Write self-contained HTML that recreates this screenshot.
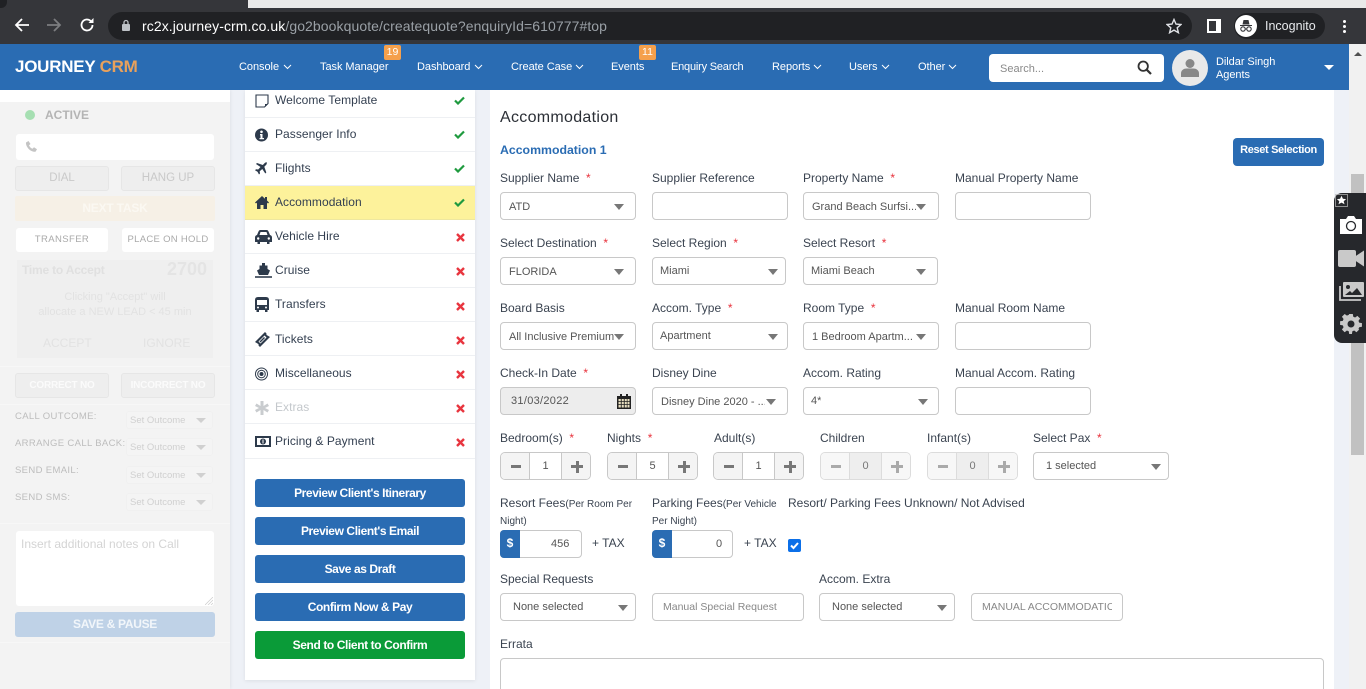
<!DOCTYPE html>
<html><head><meta charset="utf-8"><title>Journey CRM</title>
<style>
*{box-sizing:border-box}
html,body{margin:0;padding:0;width:1366px;height:689px;overflow:hidden;background:#eef1f7;font-family:"Liberation Sans",sans-serif;color:#343a40}
div,span,svg{position:absolute}
#w{left:0;top:0;width:1366px;height:689px;overflow:hidden;background:#eef1f7}
.t{white-space:nowrap;font-size:12px;line-height:16px;letter-spacing:0;color:#3a4350}
.r{color:#e8323c;position:static}
.sm{position:static;font-size:10px;letter-spacing:0}
.ctl{height:28px;background:#fff;border:1px solid #c8c8c8;border-radius:4px}
.v{white-space:nowrap;font-size:11px;line-height:14px;color:#555;letter-spacing:0;overflow:hidden;margin-top:1px}
.car{width:0;height:0;border-left:5.5px solid transparent;border-right:5.5px solid transparent;border-top:6px solid #777}
.nav{white-space:nowrap;font-size:11px;line-height:14px;color:#fff;top:60px;letter-spacing:-.05px}
.chev{top:64px;width:9px;height:6px}
.mi{left:245px;width:230px;height:34px;border-bottom:1px solid #eef0f3;background:#fff}
.mt{left:275px;white-space:nowrap;font-size:12px;line-height:16px;color:#333f50;letter-spacing:.05px}
.btn{left:255px;width:210px;height:28px;background:#2a6cb3;border-radius:3px;color:#fff;font-size:12px;font-weight:bold;letter-spacing:-.4px;line-height:28px;text-align:center}
.st{top:452px;height:28px;width:91px;background:#fff;border:1px solid #c8c8c8;border-radius:5px}
.sb{top:0;height:26px;width:28px;background:#f4f4f4;border-radius:4px 0 0 4px}
.sv{left:28px;top:0;width:33px;height:26px;border-left:1px solid #c8c8c8;border-right:1px solid #c8c8c8;font-size:11px;line-height:26px;text-align:center;color:#555}
.sb2{left:61px;top:0;height:26px;width:28px;background:#f4f4f4;border-radius:0 4px 4px 0}
.m{left:10px;top:12px;width:10px;height:3px;background:#777}
.p{left:9px;top:12px;width:12px;height:3px;background:#777}
.p2{left:13.5px;top:7.500px;width:3px;height:12px;background:#777}
.dis{border-color:#dcdcdc}
.dis .sb,.dis .sb2{background:#f7f7f7}
.dis .sv{background:#eee;border-color:#dcdcdc;color:#777}
.dis .m,.dis .p,.dis .p2{background:#aaa}
.lb{font-size:9.500px;line-height:12px;letter-spacing:.35px;color:#bdbdbd;white-space:nowrap;left:15px}
.ss{left:126px;width:87px;height:18px;background:#f4f4f4;border:1px solid #f0f0f0;border-radius:3px;font-size:9.500px;line-height:18px;color:#d0d0d0;padding-left:3px;white-space:nowrap}
.ss i{position:absolute;right:6px;top:6px;width:0;height:0;border-left:5px solid transparent;border-right:5px solid transparent;border-top:5px solid #d0d0d0}
.gb{height:25px;background:#eeeeee;border:1px solid #e6e6e6;border-radius:3px;font-size:11.500px;line-height:23px;text-align:center;color:#c9c9c9}
</style></head><body><div id="w">

<!-- browser chrome -->
<div style="left:0;top:0;width:1366px;height:8px;background:#e9e9e9"></div>
<div style="left:0;top:0;width:248px;height:8px;background:#35363a"></div>
<div style="left:0;top:0;width:7px;height:8px;background:#202124;border-radius:0 0 6px 0"></div>
<div style="left:0;top:8px;width:1366px;height:36px;background:#35363a"></div>
<svg style="left:14px;top:17px" width="16" height="16" viewBox="0 0 16 16"><path d="M15 8H2M8 2L2 8l6 6" fill="none" stroke="#fff" stroke-width="1.8"/></svg>
<svg style="left:46px;top:17px" width="16" height="16" viewBox="0 0 16 16"><path d="M1 8h13M8 2l6 6-6 6" fill="none" stroke="#7c7d80" stroke-width="1.8"/></svg>
<svg style="left:79px;top:17px" width="16" height="16" viewBox="0 0 16 16"><path d="M13.500 8a5.500 5.500 0 1 1-1.600-3.900" fill="none" stroke="#fff" stroke-width="1.8"/><path d="M9.500 6h5V1z" fill="#fff"/></svg>
<div style="left:108px;top:12px;width:1084px;height:28px;border-radius:14px;background:#202124"></div>
<svg style="left:121px;top:19px" width="10" height="13" viewBox="0 0 10 13"><rect x="1" y="5" width="8" height="7" rx="1" fill="#bdc1c6"/><path d="M3 5V3.500a2 2 0 0 1 4 0V5" fill="none" stroke="#bdc1c6" stroke-width="1.300"/></svg>
<div style="left:142px;top:17px;font-size:14px;line-height:18px;white-space:nowrap;color:#fff;letter-spacing:.08px">rc2x.journey-crm.co.uk<span style="position:static;color:#9aa0a6">/go2bookquote/createquote?enquiryId=610777#top</span></div>
<svg style="left:1166px;top:18px" width="16" height="16" viewBox="0 0 16 16"><path d="M8 1.500l2 4.600 5 .4-3.800 3.300 1.200 4.900L8 12.100l-4.400 2.600 1.200-4.900L1 6.500l5-.4z" fill="none" stroke="#dfe1e5" stroke-width="1.400"/></svg>
<div style="left:1207px;top:19px;width:14px;height:14px;background:#fff"></div>
<div style="left:1209px;top:21px;width:7px;height:10px;background:#35363a"></div>
<div style="left:1234px;top:13px;width:91px;height:26px;border-radius:13px;background:#202124"></div>
<div style="left:1235px;top:15px;width:22px;height:22px;border-radius:50%;background:#fff"></div>
<svg style="left:1238px;top:18px" width="16" height="16" viewBox="0 0 16 16"><path d="M2 7h12v1H2zM4.500 6.500L5.500 2h5l1 4.500z" fill="#35363a"/><circle cx="5" cy="11" r="2.200" fill="none" stroke="#35363a" stroke-width="1.100"/><circle cx="11" cy="11" r="2.200" fill="none" stroke="#35363a" stroke-width="1.100"/><path d="M7 11h2" stroke="#35363a"/></svg>
<div style="left:1265px;top:18px;font-size:12.500px;line-height:16px;color:#e8eaed;white-space:nowrap">Incognito</div>
<div style="left:1343px;top:20px;width:3px;height:3px;border-radius:50%;background:#fff"></div>
<div style="left:1343px;top:25px;width:3px;height:3px;border-radius:50%;background:#fff"></div>
<div style="left:1343px;top:30px;width:3px;height:3px;border-radius:50%;background:#fff"></div>

<!-- page columns -->
<div style="left:0;top:90px;width:230px;height:599px;background:#f3f3f3;box-shadow:1px 0 3px rgba(0,0,0,.06)"></div>
<div style="left:0;top:90px;width:230px;height:12px;background:#fff"></div>
<div style="left:245px;top:90px;width:230px;height:590px;background:#fff;box-shadow:0 1px 4px rgba(0,0,0,.08)"></div>
<div style="left:490px;top:90px;width:844px;height:599px;background:#fff"></div>

<!-- menu -->
<div class="mi" style="top:84px"></div>
<div class="mi" style="top:118px"></div>
<div class="mi" style="top:152px"></div>
<div class="mi" style="top:186px;background:#fdf29b;border-bottom-color:#eee7a0"></div>
<div class="mi" style="top:220px"></div>
<div class="mi" style="top:254px"></div>
<div class="mi" style="top:288px"></div>
<div class="mi" style="top:322px"></div>
<div class="mi" style="top:356px"></div>
<div class="mi" style="top:390px"></div>
<div class="mi" style="top:424px;height:35px"></div>

<!-- header -->
<div style="left:0;top:44px;width:1349px;height:46px;background:#2a6cb3"></div>
<div style="left:15px;top:56px;font-size:17px;line-height:22px;font-weight:bold;white-space:nowrap;letter-spacing:-.25px;color:#fff">JOURNEY <span style="position:static;color:#e8a15c">CRM</span></div>
<div class="nav" style="left:239px">Console</div>
<svg class="chev" style="left:283px" viewBox="0 0 9 6"><path d="M1 1l3.500 3.500L8 1" fill="none" stroke="#fff"/></svg>
<div class="nav" style="left:320px">Task Manager</div>
<div style="left:384px;top:45px;width:17px;height:15px;background:#f5a04c;border-radius:2px;color:#fff;font-size:10.500px;line-height:15px;text-align:center">19</div>
<div class="nav" style="left:417px">Dashboard</div>
<svg class="chev" style="left:474px" viewBox="0 0 9 6"><path d="M1 1l3.500 3.500L8 1" fill="none" stroke="#fff"/></svg>
<div class="nav" style="left:511px">Create Case</div>
<svg class="chev" style="left:575px" viewBox="0 0 9 6"><path d="M1 1l3.500 3.500L8 1" fill="none" stroke="#fff"/></svg>
<div class="nav" style="left:611px">Events</div>
<div style="left:639px;top:45px;width:17px;height:15px;background:#f5a04c;border-radius:2px;color:#fff;font-size:10.500px;line-height:15px;text-align:center">11</div>
<div class="nav" style="left:671px;letter-spacing:-.2px">Enquiry Search</div>
<div class="nav" style="left:772px">Reports</div>
<svg class="chev" style="left:813px" viewBox="0 0 9 6"><path d="M1 1l3.500 3.500L8 1" fill="none" stroke="#fff"/></svg>
<div class="nav" style="left:849px">Users</div>
<svg class="chev" style="left:881px" viewBox="0 0 9 6"><path d="M1 1l3.500 3.500L8 1" fill="none" stroke="#fff"/></svg>
<div class="nav" style="left:918px">Other</div>
<svg class="chev" style="left:948px" viewBox="0 0 9 6"><path d="M1 1l3.500 3.500L8 1" fill="none" stroke="#fff"/></svg>
<div style="left:989px;top:54px;width:175px;height:28px;background:#fff;border-radius:4px"></div>
<div style="left:1000px;top:62px;font-size:11px;line-height:14px;color:#8a8a8a;letter-spacing:0">Search...</div>
<svg style="left:1137px;top:60px" width="15" height="15" viewBox="0 0 15 15"><circle cx="6.200" cy="6.200" r="4.700" fill="none" stroke="#333" stroke-width="1.800"/><path d="M9.700 9.700L14 14" stroke="#333" stroke-width="2.200"/></svg>
<div style="left:1172px;top:50px;width:36px;height:36px;border-radius:50%;background:#e9e9e9"></div>
<svg style="left:1180px;top:58px" width="20" height="20" viewBox="0 0 20 20"><circle cx="10" cy="5.500" r="4.500" fill="#888"/><path d="M1 19v-3.500C1 12 4 10.500 6.500 10.500h7c2.500 0 5.500 1.500 5.500 5V19z" fill="#888"/></svg>
<div style="left:1216px;top:56px;font-size:11px;line-height:12.500px;color:#fff;white-space:nowrap;letter-spacing:-.05px">Dildar Singh<br>Agents</div>
<div style="left:1324px;top:65px;width:0;height:0;border-left:5px solid transparent;border-right:5px solid transparent;border-top:5px solid #fff"></div>

<!-- left panel -->
<div style="left:25px;top:110px;width:10px;height:10px;border-radius:50%;background:#a6dfb2"></div>
<div style="left:45px;top:107px;font-size:12px;line-height:16px;font-weight:bold;color:#b4b4b4">ACTIVE</div>
<div style="left:16px;top:134px;width:198px;height:26px;background:#fff;border-radius:3px"></div>
<svg style="left:25px;top:140px" width="13" height="13" viewBox="0 0 13 13"><path d="M1 2.500L3.500 1l2 3-1.500 1.300c.6 1.600 1.800 2.800 3.400 3.400L9 7.200l3 2-1.500 2.500C6 12.500.5 7 1 2.500z" fill="#c4c4c4"/></svg>
<div class="gb" style="left:15px;top:166px;width:94px">DIAL</div>
<div class="gb" style="left:121px;top:166px;width:94px">HANG UP</div>
<div style="left:15px;top:196px;width:200px;height:25px;background:#f6f0e6;border-radius:2px;color:#fbf8f2;font-size:12px;font-weight:bold;line-height:25px;text-align:center;letter-spacing:-.2px">NEXT TASK</div>
<div style="left:16px;top:228px;width:92px;height:24px;background:#fff;border-radius:3px;color:#aaa;font-size:9.500px;letter-spacing:.4px;line-height:24px;text-align:center">TRANSFER</div>
<div style="left:122px;top:228px;width:92px;height:24px;background:#fff;border-radius:3px;color:#aaa;font-size:9.500px;letter-spacing:.3px;line-height:24px;text-align:center;white-space:nowrap">PLACE ON HOLD</div>
<div style="left:17px;top:260px;width:196px;height:98px;background:#efefef"></div>
<div style="left:22px;top:262px;font-size:12px;line-height:16px;font-weight:bold;letter-spacing:-.2px;color:#e0e0e0">Time to Accept</div>
<div style="left:167px;top:259px;font-size:18px;line-height:20px;font-weight:bold;color:#e4e4e4">2700</div>
<div style="left:22px;top:290px;width:186px;font-size:11px;line-height:15px;text-align:center;color:#e2e2e2">Clicking "Accept" will<br>allocate a NEW LEAD &lt; 45 min</div>
<div style="left:43px;top:335px;font-size:12px;line-height:16px;color:#e2e2e2">ACCEPT</div>
<div style="left:143px;top:335px;font-size:12px;line-height:16px;color:#e2e2e2">IGNORE</div>
<div style="left:0;top:366px;width:230px;height:1px;background:#f7f7f7"></div>
<div class="gb" style="left:15px;top:373px;width:94px;font-size:10px;line-height:24px;letter-spacing:-.2px;font-weight:bold;color:#fbfbfb;white-space:nowrap">CORRECT NO</div>
<div class="gb" style="left:121px;top:373px;width:94px;font-size:10px;line-height:24px;letter-spacing:-.2px;font-weight:bold;color:#fbfbfb;white-space:nowrap">INCORRECT NO</div>
<div style="left:0;top:404px;width:230px;height:1px;background:#f7f7f7"></div>
<div class="lb" style="top:411px">CALL OUTCOME:</div><div class="ss" style="top:411px">Set Outcome<i></i></div>
<div class="lb" style="top:438px">ARRANGE CALL BACK:</div><div class="ss" style="top:438px">Set Outcome<i></i></div>
<div class="lb" style="top:465px">SEND EMAIL:</div><div class="ss" style="top:466px">Set Outcome<i></i></div>
<div class="lb" style="top:492px">SEND SMS:</div><div class="ss" style="top:493px">Set Outcome<i></i></div>
<div style="left:0;top:523px;width:230px;height:1px;background:#f7f7f7"></div>
<div style="left:16px;top:531px;width:198px;height:75px;background:#fff;border-radius:3px"></div>
<div style="left:21px;top:536px;font-size:12px;line-height:16px;color:#d4d4d4;white-space:nowrap">Insert additional notes on Call</div>
<svg style="left:205px;top:597px" width="8" height="8" viewBox="0 0 8 8"><path d="M0 8l8-8M3 8l5-5M6 8l2-2" stroke="#ccc" stroke-width=".7"/></svg>
<div style="left:15px;top:612px;width:200px;height:25px;background:#bfd2e7;border-radius:3px;color:#f2f6fa;font-size:12px;font-weight:bold;line-height:24px;text-align:center;letter-spacing:-.3px">SAVE &amp; PAUSE</div>
<div style="left:0;top:642px;width:230px;height:1px;background:#f7f7f7"></div>

<div class="mt" style="top:92px">Welcome Template</div>
<div class="mt" style="top:126px">Passenger Info</div>
<div class="mt" style="top:160px">Flights</div>
<div class="mt" style="top:194px">Accommodation</div>
<div class="mt" style="top:228px">Vehicle Hire</div>
<div class="mt" style="top:262px">Cruise</div>
<div class="mt" style="top:296px">Transfers</div>
<div class="mt" style="top:331px">Tickets</div>
<div class="mt" style="top:365px">Miscellaneous</div>
<div class="mt" style="top:399px;color:#c4c8cc">Extras</div>
<div class="mt" style="top:433px">Pricing &amp; Payment</div>

<svg style="left:255px;top:94px" width="14" height="14" viewBox="0 0 14 14"><path d="M1 1h12v8.500L9.500 13H1z" fill="none" stroke="#2d3a4b" stroke-width="1.100"/><path d="M10 13V10h3z" fill="#2d3a4b"/></svg>
<svg style="left:255px;top:128px" width="13" height="14" viewBox="0 0 13 14"><circle cx="6.500" cy="7" r="6.500" fill="#2d3a4b"/><circle cx="6.500" cy="3.800" r="1.300" fill="#fff"/><path d="M5 6h2.500v4H9v1.300H4.500V10H5.500V7.300H5z" fill="#fff"/></svg>
<svg style="left:255px;top:162px" width="13" height="13" viewBox="0 0 13 13"><path d="M12.500.500c-1-.6-2.300 0-3 .8L7.800 3 2 1 1 2l4.500 3-2.300 2.500L1 7.200 0 8.200l2.500 1.500L4 12.500l1-1-.3-2.200L7.300 7l3 4.500 1-1-2-5.800 1.700-1.700c.8-.8 1.100-2 .5-3z" fill="#2d3a4b"/></svg>
<svg style="left:255px;top:196px" width="14" height="13" viewBox="0 0 14 13"><path d="M7 0L0 6.500l1 1L2 6.600V13h3.500V9h3v4H12V6.600l1 .9 1-1-2-2V1h-2v1.800z" fill="#2d3a4b"/></svg>
<svg style="left:255px;top:230px" width="17" height="14" viewBox="0 0 17 14"><path d="M3.500 1.500Q4 0 5.500 0h6q1.500 0 2 1.500L15 5q2 .5 2 2.500V12h-2.500v2H12v-2H5v2H2.500v-2H0V7.500Q0 5.500 2 5zM4.500 5h8l-1-3h-6z" fill="#2d3a4b"/><circle cx="3.200" cy="8.500" r="1.200" fill="#fff"/><circle cx="13.800" cy="8.500" r="1.200" fill="#fff"/></svg>
<svg style="left:255px;top:263px" width="17" height="15" viewBox="0 0 17 15"><path d="M7 0h3v2.500h2.500V6L15 7.500 13 12H4L2 7.500 4.500 6V2.500H7z" fill="#2d3a4b"/><path d="M0 13h17v2H0z" fill="#5a6472"/></svg>
<svg style="left:255px;top:297px" width="14" height="15" viewBox="0 0 14 15"><path d="M0 3q0-3 3-3h8q3 0 3 3v10h-1.500v2H10v-2H4v2H1.500v-2H0z" fill="#2d3a4b"/><path d="M2 3h10v5H2z" fill="#fff"/><circle cx="3" cy="10.500" r="1" fill="#fff"/><circle cx="11" cy="10.500" r="1" fill="#fff"/></svg>
<svg style="left:255px;top:332px" width="15" height="15" viewBox="0 0 15 15"><path d="M10 0l1.500 1.500q-.5 1.500 1 2L15 5 5 15l-1.500-1.500q.5-1.500-1-2L0 10z" fill="#2d3a4b"/><path d="M9.500 3.500l2 2-6 6-2-2z" fill="#fff"/><path d="M9 5l1 1-4.500 4.500-1-1z" fill="#2d3a4b"/></svg>
<svg style="left:255px;top:367px" width="13" height="14" viewBox="0 0 13 14"><circle cx="6.500" cy="7" r="6" fill="none" stroke="#2d3a4b"/><circle cx="6.500" cy="7" r="3.800" fill="none" stroke="#2d3a4b"/><circle cx="6.500" cy="7" r="2" fill="#2d3a4b"/></svg>
<svg style="left:255px;top:401px" width="14" height="14" viewBox="0 0 14 14"><path d="M5.500 0h3v5l4-2.500L14 5 10 7l4 2-1.500 2.500-4-2.500v5h-3V9l-4 2.500L0 9l4-2-4-2 1.500-2.500 4 2.500z" fill="#c9cccf"/></svg>
<svg style="left:255px;top:436px" width="16" height="11" viewBox="0 0 16 11"><path d="M0 0h16v11H0z" fill="#2d3a4b"/><path d="M2 2h12v7H2z" fill="#fff"/><circle cx="8" cy="5.500" r="3" fill="#2d3a4b"/><path d="M7.500 3.500h1v4h-1z" fill="#fff"/></svg>

<svg style="left:454px;top:96px" width="11" height="9" viewBox="0 0 11 9"><path d="M1 4.500L4 7.500l6-6" fill="none" stroke="#1f9a3f" stroke-width="2.200"/></svg>
<svg style="left:454px;top:130px" width="11" height="9" viewBox="0 0 11 9"><path d="M1 4.500L4 7.500l6-6" fill="none" stroke="#1f9a3f" stroke-width="2.200"/></svg>
<svg style="left:454px;top:164px" width="11" height="9" viewBox="0 0 11 9"><path d="M1 4.500L4 7.500l6-6" fill="none" stroke="#1f9a3f" stroke-width="2.200"/></svg>
<svg style="left:454px;top:198px" width="11" height="9" viewBox="0 0 11 9"><path d="M1 4.500L4 7.500l6-6" fill="none" stroke="#1f9a3f" stroke-width="2.200"/></svg>
<svg style="left:456px;top:233px" width="9" height="9" viewBox="0 0 9 9"><path d="M1 1l7 7M8 1L1 8" stroke="#e8353f" stroke-width="2.400"/></svg>
<svg style="left:456px;top:267px" width="9" height="9" viewBox="0 0 9 9"><path d="M1 1l7 7M8 1L1 8" stroke="#e8353f" stroke-width="2.400"/></svg>
<svg style="left:456px;top:302px" width="9" height="9" viewBox="0 0 9 9"><path d="M1 1l7 7M8 1L1 8" stroke="#e8353f" stroke-width="2.400"/></svg>
<svg style="left:456px;top:336px" width="9" height="9" viewBox="0 0 9 9"><path d="M1 1l7 7M8 1L1 8" stroke="#e8353f" stroke-width="2.400"/></svg>
<svg style="left:456px;top:370px" width="9" height="9" viewBox="0 0 9 9"><path d="M1 1l7 7M8 1L1 8" stroke="#e8353f" stroke-width="2.400"/></svg>
<svg style="left:456px;top:404px" width="9" height="9" viewBox="0 0 9 9"><path d="M1 1l7 7M8 1L1 8" stroke="#e8353f" stroke-width="2.400"/></svg>
<svg style="left:456px;top:438px" width="9" height="9" viewBox="0 0 9 9"><path d="M1 1l7 7M8 1L1 8" stroke="#e8353f" stroke-width="2.400"/></svg>

<div class="btn" style="top:479px">Preview Client's Itinerary</div>
<div class="btn" style="top:517px">Preview Client's Email</div>
<div class="btn" style="top:555px">Save as Draft</div>
<div class="btn" style="top:593px">Confirm Now &amp; Pay</div>
<div class="btn" style="top:631px;background:#0a9b38">Send to Client to Confirm</div>

<!-- main form -->
<div style="left:500px;top:108px;font-size:16px;line-height:20px;color:#2b2f36;white-space:nowrap;letter-spacing:.3px">Accommodation</div>
<div style="left:500px;top:142px;font-size:12.300px;line-height:16px;font-weight:bold;color:#2a6cb3;white-space:nowrap">Accommodation 1</div>
<div style="left:1233px;top:138px;width:91px;height:28px;background:#2a6cb3;border-radius:4px;color:#fff;font-size:11px;font-weight:bold;letter-spacing:-.35px;line-height:25px;text-align:center;white-space:nowrap">Reset Selection</div>

<!-- row 1 -->
<div class="t" style="left:500px;top:170px">Supplier Name <span class="r">&nbsp;*</span></div>
<div class="t" style="left:652px;top:170px">Supplier Reference</div>
<div class="t" style="left:803px;top:170px">Property Name <span class="r">&nbsp;*</span></div>
<div class="t" style="left:955px;top:170px">Manual Property Name</div>
<div class="ctl" style="left:500px;top:192px;width:136px"></div><div class="v" style="left:509px;top:199px">ATD</div><div class="car" style="left:614px;top:204px"></div>
<div class="ctl" style="left:652px;top:192px;width:136px"></div>
<div class="ctl" style="left:803px;top:192px;width:136px"></div><div class="v" style="left:812px;top:199px;width:104px">Grand Beach Surfsi...</div><div class="car" style="left:916px;top:204px"></div>
<div class="ctl" style="left:955px;top:192px;width:136px"></div>

<!-- row 2 -->
<div class="t" style="left:500px;top:235px">Select Destination <span class="r">&nbsp;*</span></div>
<div class="t" style="left:652px;top:235px">Select Region <span class="r">&nbsp;*</span></div>
<div class="t" style="left:803px;top:235px">Select Resort <span class="r">&nbsp;*</span></div>
<div class="ctl" style="left:500px;top:257px;width:136px"></div><div class="v" style="left:509px;top:264px">FLORIDA</div><div class="car" style="left:614px;top:269px"></div>
<div class="ctl" style="left:652px;top:257px;width:134px"></div><div class="v" style="left:660px;top:263px">Miami</div><div class="car" style="left:768px;top:269px"></div>
<div class="ctl" style="left:803px;top:257px;width:135px"></div><div class="v" style="left:811px;top:263px">Miami Beach</div><div class="car" style="left:916px;top:269px"></div>

<!-- row 3 -->
<div class="t" style="left:500px;top:300px">Board Basis</div>
<div class="t" style="left:652px;top:300px">Accom. Type <span class="r">&nbsp;*</span></div>
<div class="t" style="left:803px;top:300px">Room Type <span class="r">&nbsp;*</span></div>
<div class="t" style="left:955px;top:300px">Manual Room Name</div>
<div class="ctl" style="left:500px;top:322px;width:136px"></div><div class="v" style="left:509px;top:329px;width:108px">All Inclusive Premium</div><div class="car" style="left:614px;top:334px"></div>
<div class="ctl" style="left:652px;top:322px;width:136px"></div><div class="v" style="left:660px;top:328px">Apartment</div><div class="car" style="left:768px;top:334px"></div>
<div class="ctl" style="left:803px;top:322px;width:136px"></div><div class="v" style="left:812px;top:329px;width:104px">1 Bedroom Apartm...</div><div class="car" style="left:916px;top:334px"></div>
<div class="ctl" style="left:955px;top:322px;width:136px"></div>

<!-- row 4 -->
<div class="t" style="left:500px;top:365px">Check-In Date <span class="r">&nbsp;*</span></div>
<div class="t" style="left:652px;top:365px">Disney Dine</div>
<div class="t" style="left:803px;top:365px">Accom. Rating</div>
<div class="t" style="left:955px;top:365px">Manual Accom. Rating</div>
<div class="ctl" style="left:500px;top:387px;width:136px;background:#ededed"></div><div class="v" style="left:511px;top:393px;letter-spacing:.3px">31/03/2022</div>
<svg style="left:617px;top:394px" width="14" height="15" viewBox="0 0 14 15"><path d="M3 0h2v2h4V0h2v2h3v13H0V2h3z" fill="#222"/><path d="M1.500 5h2.300v2.200H1.500zM4.700 5h2.100v2.200H4.700zM7.700 5h2.100v2.200H7.700zM10.500 5h2v2.200h-2zM1.500 8h2.300v2.200H1.500zM4.700 8h2.100v2.200H4.700zM7.700 8h2.100v2.200H7.700zM10.500 8h2v2.200h-2zM1.500 11h2.300v2.500H1.500zM4.700 11h2.100v2.500H4.700zM7.700 11h2.100v2.500H7.700zM10.500 11h2v2.500h-2z" fill="#e8dfc0"/></svg>
<div class="ctl" style="left:652px;top:387px;width:136px"></div><div class="v" style="left:661px;top:394px;width:104px">Disney Dine 2020 - ...</div><div class="car" style="left:766px;top:399px"></div>
<div class="ctl" style="left:803px;top:387px;width:136px"></div><div class="v" style="left:811px;top:393px">4*</div><div class="car" style="left:918px;top:399px"></div>
<div class="ctl" style="left:955px;top:387px;width:136px"></div>

<!-- row 5 -->
<div class="t" style="left:500px;top:430px">Bedroom(s) <span class="r">&nbsp;*</span></div>
<div class="t" style="left:607px;top:430px">Nights <span class="r">&nbsp;*</span></div>
<div class="t" style="left:714px;top:430px">Adult(s)</div>
<div class="t" style="left:820px;top:430px">Children</div>
<div class="t" style="left:927px;top:430px">Infant(s)</div>
<div class="t" style="left:1033px;top:430px">Select Pax <span class="r">&nbsp;*</span></div>

<div class="st" style="left:500px"><div class="sb" style="left:0"><div class="m"></div></div><div class="sv">1</div><div class="sb2"><div class="p"></div><div class="p2"></div></div></div>
<div class="st" style="left:607px"><div class="sb" style="left:0"><div class="m"></div></div><div class="sv">5</div><div class="sb2"><div class="p"></div><div class="p2"></div></div></div>
<div class="st" style="left:713px"><div class="sb" style="left:0"><div class="m"></div></div><div class="sv">1</div><div class="sb2"><div class="p"></div><div class="p2"></div></div></div>
<div class="st dis" style="left:820px"><div class="sb" style="left:0"><div class="m"></div></div><div class="sv">0</div><div class="sb2"><div class="p"></div><div class="p2"></div></div></div>
<div class="st dis" style="left:927px"><div class="sb" style="left:0"><div class="m"></div></div><div class="sv">0</div><div class="sb2"><div class="p"></div><div class="p2"></div></div></div>
<div class="ctl" style="left:1033px;top:452px;width:136px"></div><div class="v" style="left:1046px;top:458px">1 selected</div><div class="car" style="left:1151px;top:464px"></div>

<!-- row 6 -->
<div class="t" style="left:500px;top:495px">Resort Fees<span class="sm">(Per Room Per</span></div>
<div class="t" style="left:500px;top:514px;font-size:10px">Night)</div>
<div class="t" style="left:652px;top:495px">Parking Fees<span class="sm">(Per Vehicle</span></div>
<div class="t" style="left:652px;top:514px;font-size:10px">Per Night)</div>
<div class="t" style="left:788px;top:495px">Resort/ Parking Fees Unknown/ Not Advised</div>
<div class="ctl" style="left:500px;top:530px;width:82px"></div>
<div style="left:500px;top:530px;width:20px;height:28px;background:#2a6cb3;border-radius:4px 0 0 4px;color:#fff;font-size:12px;font-weight:bold;line-height:27px;text-align:center">$</div>
<div class="v" style="left:551px;top:536px">456</div>
<div class="t" style="left:592px;top:535px">+ TAX</div>
<div class="ctl" style="left:652px;top:530px;width:81px"></div>
<div style="left:652px;top:530px;width:20px;height:28px;background:#2a6cb3;border-radius:4px 0 0 4px;color:#fff;font-size:12px;font-weight:bold;line-height:27px;text-align:center">$</div>
<div class="v" style="left:716px;top:536px">0</div>
<div class="t" style="left:744px;top:535px">+ TAX</div>
<div style="left:788px;top:539px;width:13px;height:13px;background:#0b6fe8;border-radius:2px"></div>
<svg style="left:788px;top:539px" width="13" height="13" viewBox="0 0 13 13"><path d="M3 6.500l2.500 2.500L10 4" fill="none" stroke="#fff" stroke-width="2"/></svg>

<!-- row 7 -->
<div class="t" style="left:500px;top:571px">Special Requests</div>
<div class="t" style="left:819px;top:571px">Accom. Extra</div>
<div class="ctl" style="left:500px;top:593px;width:136px"></div><div class="v" style="left:513px;top:599px">None selected</div><div class="car" style="left:618px;top:605px"></div>
<div class="ctl" style="left:652px;top:593px;width:152px"></div><div class="v" style="left:663px;top:599px;color:#888;width:135px;font-size:10.500px">Manual Special Request</div>
<div class="ctl" style="left:819px;top:593px;width:136px"></div><div class="v" style="left:832px;top:599px">None selected</div><div class="car" style="left:937px;top:605px"></div>
<div class="ctl" style="left:971px;top:593px;width:152px"></div><div class="v" style="left:982px;top:599px;color:#888;width:130px;font-size:10.500px">MANUAL ACCOMMODATION</div>

<div class="t" style="left:500px;top:636px">Errata</div>
<div style="left:500px;top:658px;width:824px;height:50px;background:#fff;border:1px solid #c8c8c8;border-radius:4px"></div>

<!-- scrollbar -->
<div style="left:1349px;top:44px;width:17px;height:645px;background:#f1f1f1"></div>
<div style="left:1354px;top:52px;width:0;height:0;border-left:4px solid transparent;border-right:4px solid transparent;border-bottom:4px solid #505050"></div>
<div style="left:1351px;top:174px;width:13px;height:281px;background:#c1c1c1"></div>

<!-- floating widget -->
<div style="left:1334px;top:193px;width:32px;height:150px;background:#26282c;border-radius:8px 0 0 8px"></div>
<svg style="left:1335px;top:194px" width="13" height="13" viewBox="0 0 13 13"><rect x=".5" y=".5" width="12" height="12" fill="none" stroke="#bbb" stroke-width=".7"/><path d="M6.500 1.800l1.400 3 3.200.3-2.400 2.100.8 3.100-3-1.700-3 1.700.8-3.100L1.900 5.100l3.200-.3z" fill="#fff"/></svg>
<svg style="left:1339px;top:215px" width="24" height="20" viewBox="0 0 24 20"><path d="M1 4h6l2-3h6l2 3h6v15H1z" fill="#fff"/><circle cx="12" cy="11" r="4.500" fill="#fff" stroke="#26282c" stroke-width="1.300"/></svg>
<svg style="left:1337px;top:250px" width="28" height="17" viewBox="0 0 28 17"><rect x="1" y="0" width="18" height="17" rx="2" fill="#c9c9c9"/><path d="M18 6.500l9-6v16l-9-6z" fill="#c9c9c9"/></svg>
<svg style="left:1338px;top:282px" width="26" height="20" viewBox="0 0 26 20"><rect x="5" y="0" width="21" height="15" rx="1" fill="#c9c9c9"/><circle cx="10" cy="5" r="2" fill="#26282c"/><path d="M7 13l5-4 2 2 5-5 5 7z" fill="#26282c"/><path d="M2 4v14h21" fill="none" stroke="#c9c9c9" stroke-width="1.800"/></svg>
<svg style="left:1340px;top:313px" width="22" height="22" viewBox="0 0 22 22"><path d="M9 0h4l.5 3 2 .8L18 2l3 3-1.800 2.500.8 2 3 .5v4l-3 .5-.8 2L20 17l-3 3-2.500-1.800-2 .8-.5 3H9l-.5-3-2-.8L4 20l-3-3 1.800-2.500-.8-2-3-.5V8l3-.5.8-2L1 3l3-3 2.500 1.800 2-.8z" transform="translate(1 1) scale(.91)" fill="#c9c9c9"/><circle cx="11" cy="11" r="3.500" fill="#26282c"/></svg>
</div></body></html>
